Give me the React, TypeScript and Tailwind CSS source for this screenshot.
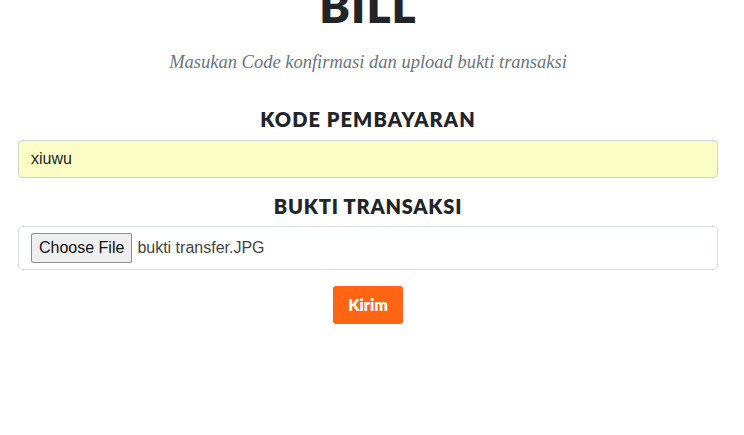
import React, { useState } from "react";

const headFont = { fontFamily: '"Lato", "Open Sans", sans-serif' };

export default function App() {
  const [code, setCode] = useState("xiuwu");

  return (
    <div className="min-h-[435px] w-[744px] overflow-hidden bg-white">
      <div className="ml-[18px] w-[700px] flex flex-col items-center">
        <h1
          className="mt-[-22px] text-[46px] leading-[56px] font-extrabold tracking-[1px] text-[#212529]"
          style={headFont}
        >
          BILL
        </h1>
        <p className="mt-[16px] text-[18.5px] leading-[24px] italic text-[#6c757d] font-['Liberation_Serif',serif]">
          Masukan Code konfirmasi dan upload bukti transaksi
        </p>

        <label
          className="mt-[33px] text-[20px] leading-[24px] font-extrabold tracking-[1.1px] text-[#212529]"
          style={headFont}
        >
          KODE PEMBAYARAN
        </label>
        <input
          value={code}
          onChange={(e) => setCode(e.target.value)}
          className="mt-[9px] h-[38px] w-full rounded border border-[#ced4da] bg-[#fafec4] px-3 text-[16px] text-[#212529] outline-none font-['Liberation_Sans',sans-serif]"
        />

        <label
          className="mt-[16px] text-[20px] leading-[24px] font-extrabold tracking-[0.8px] text-[#212529]"
          style={headFont}
        >
          BUKTI TRANSAKSI
        </label>
        <div className="mt-[8px] flex h-[44px] w-full items-center rounded border border-[#dcdfe3] bg-white px-3 font-['Liberation_Sans',sans-serif]">
          <button className="h-[30px] rounded-[2px] border border-[#8f8f8f] bg-[#efefef] px-[7px] text-[16px] text-[#111]">
            Choose File
          </button>
          <span className="ml-[5px] text-[16px] text-[#444]">bukti transfer.JPG</span>
        </div>

        <button
          className="mt-[16px] h-[38px] w-[70px] rounded-[3px] bg-[#ff6512] text-[16px] font-extrabold text-white"
          style={headFont}
        >
          Kirim
        </button>
      </div>
    </div>
  );
}
